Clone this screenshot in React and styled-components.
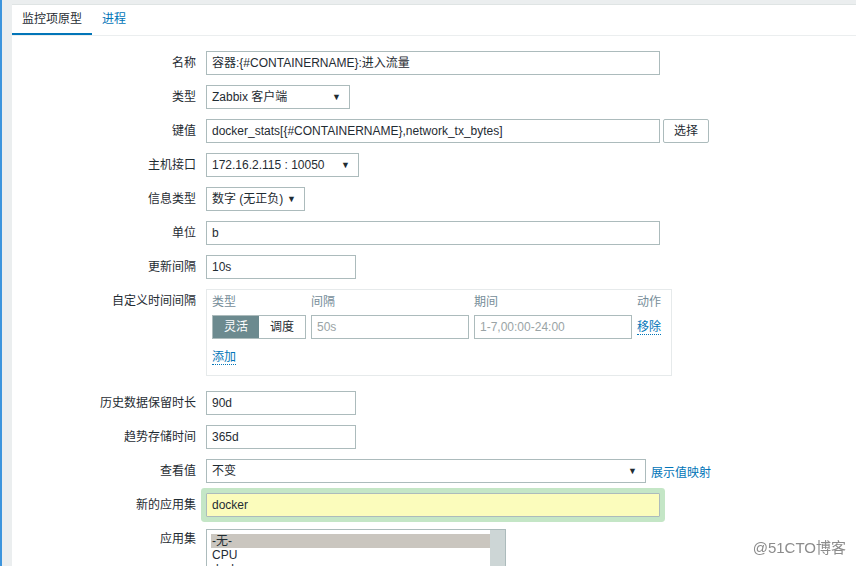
import React from 'react'
import styled, { createGlobalStyle } from 'styled-components'

const GlobalStyle = createGlobalStyle`
  html, body {
    margin: 0;
    padding: 0;
    background: #ebeeef;
  }
  body {
    font-family: "Liberation Sans", Arial, "Noto Sans CJK SC", sans-serif;
    font-size: 12px;
    color: #1f2c33;
  }
`

const Page = styled.div`
  display: flex;
  min-height: 566px;
  overflow: hidden;
  border-left: 2px solid #3d95dd;
`

const Panel = styled.div`
  flex: 1;
  margin: 4px 0 0 10px;
  background: #fff;
  border-top: 1px solid #dfe4e4;
  min-height: 561px;
`

const TabBar = styled.div`
  display: flex;
  height: 30px;
  border-bottom: 1px solid #ebeeef;
`

const Tab = styled.div`
  padding: 0 10px;
  line-height: 28px;
  border-bottom: 2px solid ${p => (p.$active ? '#0275b8' : 'transparent')};
  color: ${p => (p.$active ? '#1f2c33' : '#0275b8')};
`

const Form = styled.div`
  display: grid;
  grid-template-columns: 184px 1fr;
  column-gap: 10px;
  row-gap: 10px;
  padding-top: 15px;
`

const Label = styled.div`
  text-align: right;
  line-height: 24px;
  white-space: nowrap;
  margin-top: ${p => p.$offset || 0}px;
`

const Field = styled.div`
  display: flex;
  align-items: center;
  gap: ${p => p.$gap || 0}px;
  min-height: 24px;
  margin-top: ${p => p.$offset || 0}px;
`

const TextBox = styled.div`
  box-sizing: border-box;
  width: ${p => p.$w}px;
  height: 24px;
  line-height: 22px;
  padding: 0 5px;
  border: 1px solid #acbbbc;
  background: ${p => p.$bg || '#fff'};
  color: ${p => (p.$muted ? '#9aa4a6' : '#1f2c33')};
  white-space: nowrap;
  overflow: hidden;
  ${p => p.$glow && 'box-shadow: 0 0 0 5px #c4e6c6; border-radius: 1px;'}
`

const Select = styled(TextBox)`
  display: flex;
  justify-content: space-between;
  align-items: center;
  padding-right: 8px;
`

const Arrow = styled.span`
  font-size: 9px;
  color: #1f2c33;
`

const Button = styled.div`
  box-sizing: border-box;
  height: 24px;
  line-height: 22px;
  padding: 0 10px;
  border: 1px solid #acbbbc;
  border-radius: 2px;
  background: #fff;
`

const Link = styled.span`
  color: #0275b8;
  white-space: nowrap;
  ${p => p.$dotted && 'border-bottom: 1px dotted #0275b8; line-height: 14px;'}
`

const IntervalBox = styled.div`
  box-sizing: border-box;
  width: 466px;
  padding: 5px 5px 6px 5px;
  border: 1px solid #e6eaeb;
`

const IntervalGrid = styled.div`
  display: grid;
  grid-template-columns: 94px 158px 158px auto;
  column-gap: 5px;
  row-gap: 6px;
  align-items: center;
`

const HeadCell = styled.div`
  color: #768d99;
  line-height: 14px;
`

const Segmented = styled.div`
  display: flex;
  box-sizing: border-box;
  height: 24px;
  border: 1px solid #acbbbc;
`

const Segment = styled.div`
  flex: 1;
  text-align: center;
  line-height: 22px;
  background: ${p => (p.$on ? '#6c8a8f' : '#fff')};
  color: ${p => (p.$on ? '#fff' : '#1f2c33')};
`

const AddRow = styled.div`
  margin-top: 6px;
  height: 24px;
  display: flex;
  align-items: center;
`

const ListBox = styled.div`
  box-sizing: border-box;
  width: 300px;
  height: 60px;
  border: 1px solid #acbbbc;
  border-bottom: none;
  display: flex;
  margin-bottom: -40px;
`

const Options = styled.div`
  flex: 1;
  padding: 4px 0 0 4px;
`

const Option = styled.div`
  line-height: 14px;
  padding-left: 1px;
  background: ${p => (p.$selected ? '#cac6bf' : 'transparent')};
`

const Scrollbar = styled.div`
  width: 15px;
  background: #cdd6d6;
`

const Watermark = styled.div`
  position: fixed;
  right: 10px;
  bottom: 9px;
  font-size: 15px;
  color: #8c8c8c;
  text-shadow: 0 0 2px #fff, 0 0 1px #fff;
`

const rowsTop = [
  ['名称', <TextBox $w={454}>容器:{'{'}#CONTAINERNAME{'}'}:进入流量</TextBox>],
  ['类型', <Select $w={144}>Zabbix 客户端<Arrow>▼</Arrow></Select>],
  [
    '键值',
    <Field $gap={3}>
      <TextBox $w={454}>docker_stats[{'{'}#CONTAINERNAME{'}'},network_tx_bytes]</TextBox>
      <Button>选择</Button>
    </Field>,
  ],
  ['主机接口', <Select $w={153}>172.16.2.115 : 10050<Arrow>▼</Arrow></Select>],
  ['信息类型', <Select $w={99}>数字 (无正负)<Arrow>▼</Arrow></Select>],
  ['单位', <TextBox $w={454}>b</TextBox>],
  ['更新间隔', <TextBox $w={150}>10s</TextBox>],
]

export default function App() {
  return (
    <>
      <GlobalStyle />
      <Page>
        <Panel>
          <TabBar>
            <Tab $active>监控项原型</Tab>
            <Tab>进程</Tab>
          </TabBar>
          <Form>
            {rowsTop.map(([label, field]) => (
              <React.Fragment key={label}>
                <Label>{label}</Label>
                <Field>{field}</Field>
              </React.Fragment>
            ))}

            <Label>自定义时间间隔</Label>
            <div>
              <IntervalBox>
                <IntervalGrid>
                  <HeadCell>类型</HeadCell>
                  <HeadCell>间隔</HeadCell>
                  <HeadCell>期间</HeadCell>
                  <HeadCell>动作</HeadCell>
                  <Segmented>
                    <Segment $on>灵活</Segment>
                    <Segment>调度</Segment>
                  </Segmented>
                  <TextBox $w={158} $muted>50s</TextBox>
                  <TextBox $w={158} $muted>1-7,00:00-24:00</TextBox>
                  <div><Link $dotted>移除</Link></div>
                </IntervalGrid>
                <AddRow><Link $dotted>添加</Link></AddRow>
              </IntervalBox>
            </div>

            <Label $offset={5}>历史数据保留时长</Label>
            <Field $offset={5}><TextBox $w={150}>90d</TextBox></Field>

            <Label>趋势存储时间</Label>
            <Field><TextBox $w={150}>365d</TextBox></Field>

            <Label>查看值</Label>
            <Field $gap={5}>
              <Select $w={440}>不变<Arrow>▼</Arrow></Select>
              <Link>展示值映射</Link>
            </Field>

            <Label>新的应用集</Label>
            <Field><TextBox $w={454} $bg="#fbfcbc" $glow>docker</TextBox></Field>

            <Label>应用集</Label>
            <Field>
              <ListBox>
                <Options>
                  <Option $selected>-无-</Option>
                  <Option>CPU</Option>
                  <Option>docker</Option>
                </Options>
                <Scrollbar />
              </ListBox>
            </Field>
          </Form>
        </Panel>
      </Page>
      <Watermark>@51CTO博客</Watermark>
    </>
  )
}
